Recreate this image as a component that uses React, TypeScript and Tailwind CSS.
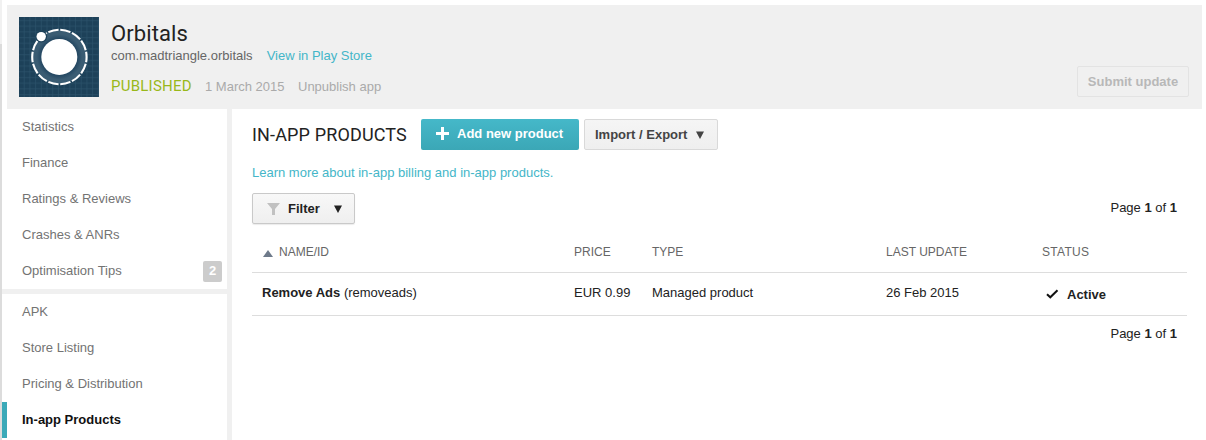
import React from "react";

const primaryNav = [
  { label: "Statistics" },
  { label: "Finance" },
  { label: "Ratings & Reviews" },
  { label: "Crashes & ANRs" },
  { label: "Optimisation Tips", badge: "2" },
];

const secondaryNav = [
  { label: "APK" },
  { label: "Store Listing" },
  { label: "Pricing & Distribution" },
  { label: "In-app Products", active: true },
];

type NavEntry = { label: string; badge?: string; active?: boolean };

function AppIcon() {
  return (
    <svg width="80" height="80" viewBox="0 0 80 80" className="block shrink-0">
      <defs>
        <pattern id="grid" width="5.7" height="5.7" patternUnits="userSpaceOnUse">
          <path d="M5.2 0V5.7M0 3.5H5.7" stroke="#2b526b" strokeWidth="0.7" fill="none" />
        </pattern>
        <radialGradient id="glow" cx="0.5" cy="0.5" r="0.5">
          <stop offset="0.65" stopColor="#214560" />
          <stop offset="0.84" stopColor="#3a5c73" />
          <stop offset="1" stopColor="#3a5c73" />
        </radialGradient>
      </defs>
      <rect width="80" height="80" fill="#1d4159" />
      <rect width="80" height="80" fill="url(#grid)" />
      <circle cx="40.4" cy="40" r="27" fill="url(#glow)" />
      <circle
        cx="40.4"
        cy="40"
        r="27.2"
        fill="none"
        stroke="#fff"
        strokeWidth="2.1"
        pathLength="140"
        strokeDasharray="8.6 1.4"
        strokeDashoffset="-5.7"
      />
      <circle cx="40.3" cy="39.9" r="18" fill="#fff" />
      <circle cx="22.2" cy="19.6" r="6" fill="#1d4159" />
      <circle cx="22.2" cy="19.6" r="4.7" fill="#fff" />
    </svg>
  );
}

function Header() {
  return (
    <header className="ml-[5px] flex h-[104px] w-[1195px] bg-[#f0f0f0] pl-3 pt-3">
      <AppIcon />
      <div className="ml-3 flex-1">
        <h1 className="mt-1 font-['Roboto',sans-serif] text-[22px] leading-[26px] tracking-[0.1px] text-[#222]">
          Orbitals
        </h1>
        <div className="flex h-[18px] gap-[14px] leading-[18px]">
          <span className="text-[#666]">com.madtriangle.orbitals</span>
          <a className="text-[#44b6c8]">View in Play Store</a>
        </div>
        <div className="mt-3 flex h-[18px] leading-[20px] text-[#aaa]">
          <span className="w-[94px] font-['Roboto',sans-serif] text-[15px] leading-[18px] tracking-[0.25px] text-[#99b81a]">
            PUBLISHED
          </span>
          <span className="w-[93px]">1 March 2015</span>
          <span>Unpublish app</span>
        </div>
      </div>
      <button className="mr-[13px] mt-[49px] h-[31px] w-[112px] rounded-[2px] border border-[#e3e3e3] font-bold text-[#b8b8b8]">
        Submit update
      </button>
    </header>
  );
}

function NavItem({ label, badge, active }: NavEntry) {
  return (
    <li
      className={
        active
          ? "flex h-9 items-center border-l-[5px] border-[#3ba9b8] pl-[15px] font-bold text-[#111]"
          : "flex h-9 items-center border-l-[5px] border-transparent pl-[15px] text-[#737373]"
      }
    >
      <span>{label}</span>
      {badge && (
        <span className="ml-auto mr-[5px] h-[21px] w-[19px] rounded-[2px] bg-[#ccc] text-center font-bold leading-[20px] text-white">
          {badge}
        </span>
      )}
    </li>
  );
}

function Sidebar() {
  return (
    <nav className="w-[230px] shrink-0 border-r-[5px] border-[#f0f0f0]">
      <ul>
        {primaryNav.map((item) => (
          <NavItem key={item.label} {...item} />
        ))}
      </ul>
      <div className="h-[5px] bg-[#f0f0f0]" />
      <ul>
        {secondaryNav.map((item) => (
          <NavItem key={item.label} {...item} />
        ))}
      </ul>
    </nav>
  );
}

function Caret({ className }: { className: string }) {
  return (
    <svg width="8" height="8" viewBox="0 0 8 8" className={className}>
      <path d="M0 0.5H8L4 8Z" fill="currentColor" />
    </svg>
  );
}

function Pager({ className }: { className: string }) {
  return (
    <div className={className}>
      Page <b>1</b> of <b>1</b>
    </div>
  );
}

const columns = "grid grid-cols-[322px_78px_234px_156px_145px]";

function ProductsPanel() {
  return (
    <main className="ml-5 w-[935px] pt-[10px] text-[#222]">
      <div className="flex h-[31px] items-center">
        <h2 className="w-[169px] whitespace-nowrap font-['Roboto',sans-serif] text-[18px] tracking-[0.15px]">
          IN-APP PRODUCTS
        </h2>
        <button className="flex h-[31px] w-[158px] items-center rounded-[2px] bg-gradient-to-b from-[#45b8c9] to-[#3ba7b6] pb-[2px] pl-[15px] font-bold text-white">
          <svg width="13" height="13" viewBox="0 0 13 13" className="mr-2">
            <path d="M6.5 0V13M0 6.5H13" stroke="#fff" strokeWidth="3" />
          </svg>
          Add new product
        </button>
        <button className="ml-[5px] flex h-[31px] w-[134px] items-center rounded-[2px] border border-[#d9d9d9] bg-gradient-to-b from-[#f5f5f5] to-[#efefef] pl-[10px] font-bold text-[#444]">
          Import / Export
          <Caret className="ml-[9px] mt-px" />
        </button>
      </div>
      <a className="mt-[13px] block h-5 leading-5 text-[#44b6c8]">
        Learn more about in-app billing and in-app products.
      </a>
      <div className="mt-[10px] flex h-[31px] justify-between">
        <button className="flex h-[31px] w-[103px] items-center rounded-[2px] border border-[#c9c9c9] bg-gradient-to-b from-[#f8f8f8] to-[#efefef] pl-[14px] font-bold text-[#222] shadow-[0_1px_1px_rgba(0,0,0,0.08)]">
          <svg width="13" height="12" viewBox="0 0 13 12" className="mr-2">
            <path d="M0 0H13L8 6V12H5V6Z" fill="#c1c1c1" />
          </svg>
          Filter
          <Caret className="ml-[14px] mt-px" />
        </button>
        <Pager className="mr-[10px] h-[30px] leading-[30px]" />
      </div>
      <section>
        <div className={`${columns} h-[49px] border-b border-[#ddd] pt-[18px] text-xs leading-5 text-[#666]`}>
          <div className="flex h-5 items-center pl-[11px]">
            <svg width="10" height="7" viewBox="0 0 10 7" className="mr-[6px] mt-[2px]">
              <path d="M5 0L10 7H0Z" fill="#6e7a8a" />
            </svg>
            NAME/ID
          </div>
          <div>PRICE</div>
          <div>TYPE</div>
          <div>LAST UPDATE</div>
          <div className="tracking-[0.3px]">STATUS</div>
        </div>
        <div className={`${columns} h-[43px] border-b border-[#ddd] pt-[10px] leading-5`}>
          <div className="pl-[10px]">
            <b>Remove Ads</b> (removeads)
          </div>
          <div>EUR 0.99</div>
          <div>Managed product</div>
          <div>26 Feb 2015</div>
          <div className="mt-[2px] flex h-5 items-center pl-1 font-bold">
            <svg width="13" height="10" viewBox="0 0 13 10" className="-mt-[2px] mr-2">
              <path d="M1 5.2L4.3 8.3L11.5 1.2" fill="none" stroke="#111" strokeWidth="2" />
            </svg>
            Active
          </div>
        </div>
      </section>
      <Pager className="mr-[10px] mt-2 h-5 text-right leading-5" />
    </main>
  );
}

export default function App() {
  return (
    <div className="flex h-[440px] w-[1206px] overflow-hidden bg-white font-['Liberation_Sans',Arial,sans-serif] text-[13px]">
      <div className="w-[2px] shrink-0">
        <div className="h-[44px] bg-[#f1f1f1]" />
        <div className="h-[396px] bg-[#dcdcdc]" />
      </div>
      <div className="flex-1 pt-[5px]">
        <Header />
        <div className="flex h-[331px]">
          <Sidebar />
          <ProductsPanel />
        </div>
      </div>
    </div>
  );
}
